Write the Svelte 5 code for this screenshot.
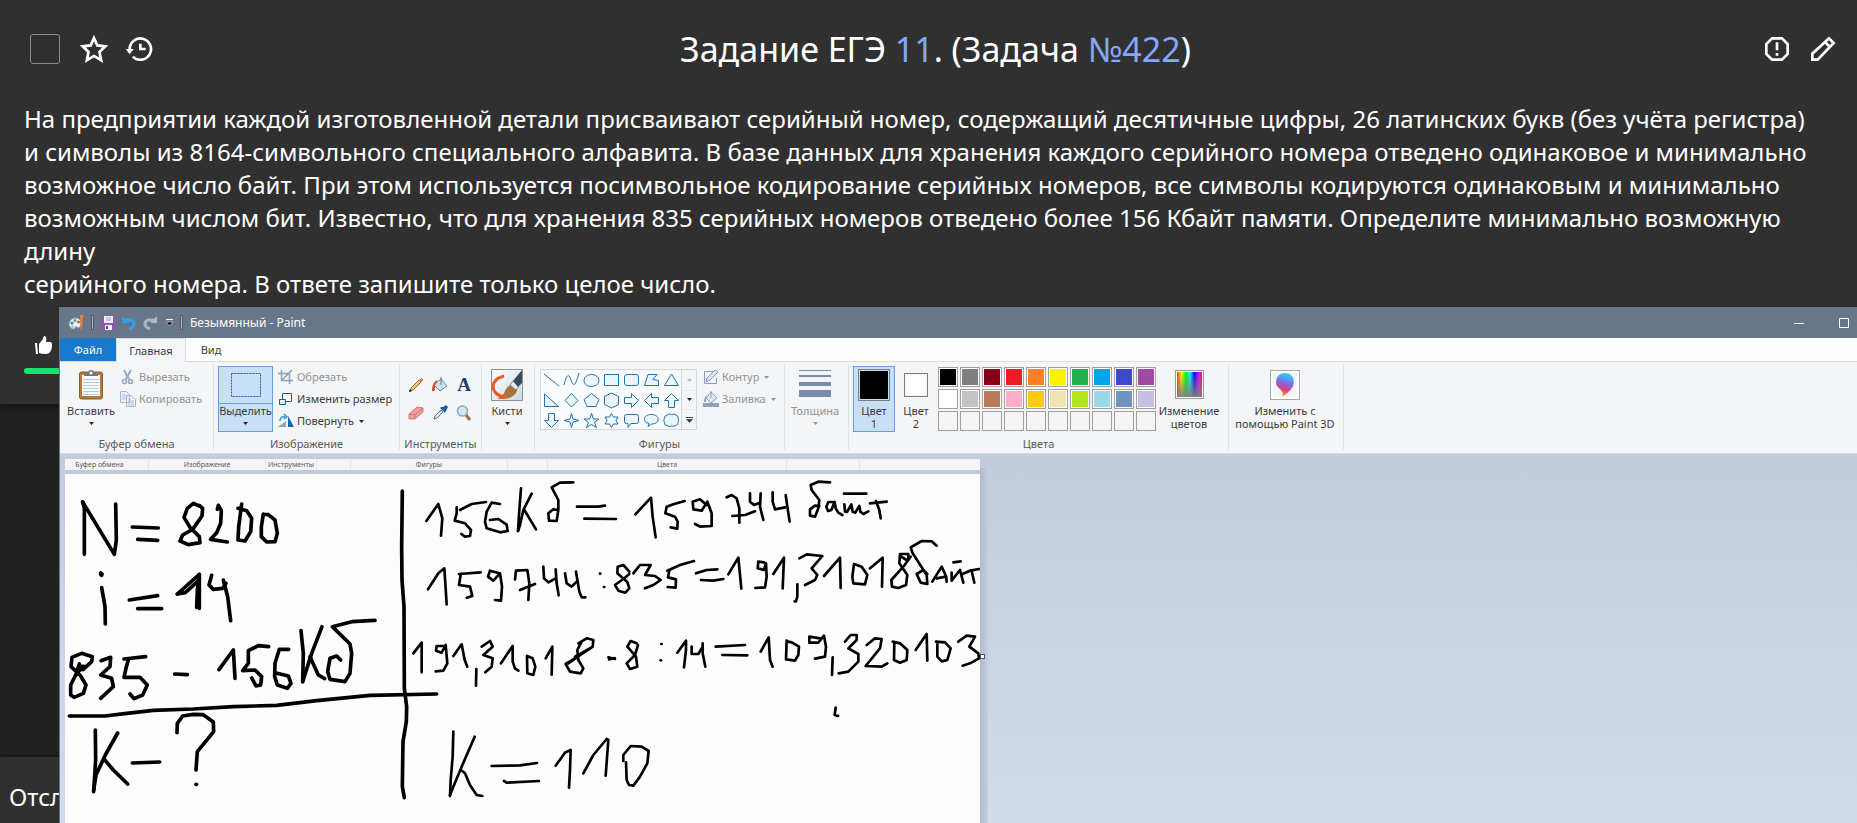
<script>
  const shapes = [
    'M1 2 16 14',
    'M1 13C4 1 6 2 8 8S12 16 16 1',
    'M8.500 2.500a7.500 6 0 1 0 .01 0z',
    'M1.500 2.500h14v11h-14z',
    'M4 2.500h9q2.500 0 2.500 2.500v6q0 2.500-2.500 2.500h-9q-2.500 0-2.500-2.500v-6q0-2.500 2.500-2.500z',
    'M5 2.500h9l-4 5 5.500 1v5h-14z',
    'M8.500 2 15.500 13.500h-14z',
    'M1.500 2v12.500h14z',
    'M8.500 1.500 15 8.500 8.500 15 2 8.500z',
    'M8.500 1.500 16 7.500 13 14.500H4L1 7.500z',
    'M8.500 1 15.500 4.500v8L8.500 16 1.500 12.500v-8z',
    'M1.500 5.500h7v-4l7 7-7 7v-4h-7z',
    'M15.500 5.500h-7v-4l-7 7 7 7v-4h7z',
    'M5.500 15.500v-7h-4l7-7 7 7h-4v7z',
    'M5.500 1.500v7h-4l7 7 7-7h-4v-7z',
    'M8.500 1.500 10 7l6 1.500L10 10 8.500 15.500 7 10 1 8.500 7 7z',
    'M8.500 1.500 10.500 7H16l-4.500 3.500 2 5-5-3-5 3 2-5L1 7h5.500z',
    'M8.500 1.500 10.500 5H15l-2 3.500 2 3.500h-4.500l-2 3.500-2-3.500H2l2-3.500L2 5h4.500z',
    'M3.500 2.500h10q2 0 2 2v5q0 2-2 2H8l-3 4v-4H3.500q-2 0-2-2v-5q0-2 2-2z',
    'M5 14.500 6 11.500C-1 10 0 2.500 8.500 2.500S18 12 8.500 12z',
    'M4 3q2-2 4.500-.500Q11 1 13 3q2.500.500 2 3 1.500 2.500 0 4.500.500 2.500-2.500 3-1.500 1.500-4 .500-2 1.500-4.500-.500-3 0-2.500-3Q0 8 1.500 6 1.500 3.500 4 3z'
  ];

  const palette = [
    '#000000', '#7f7f7f', '#880015', '#ed1c24', '#ff7f27', '#fff200', '#22b14c', '#00a2e8', '#3f48cc', '#a349a4',
    '#ffffff', '#c3c3c3', '#b97a57', '#ffaec9', '#ffc90e', '#efe4b0', '#b5e61d', '#99d9ea', '#7092be', '#c8bfe7',
    '', '', '', '', '', '', '', '', '', ''
  ];

  const strip = [
    { label: 'Буфер обмена', width: 84, first: true },
    { label: 'Изображение', width: 117 },
    { label: 'Инструменты', width: 51 },
    { label: '', width: 34 },
    { label: 'Фигуры', width: 157 },
    { label: '', width: 40 },
    { label: 'Цвета', width: 239 },
    { label: '', width: 73 }
  ];

  // Pen strokes of the canvas, three units to a pixel, grouped by pen size and sheet origin.
  const pens = [
    {
      x: -65, y: -34, size: 11,
      strokes: [
        '248,186 253,205 253,343', '248,186 343,343 349,300 347,192', '397,261 475,264', '413,298 473,301',
        '598,198 580,190 562,205 552,232 570,262 598,290 600,308 565,314 540,303 548,285 578,268 606,228 608,205 598,196',
        '652,208 655,196 664,212 662,250 650,278 632,298 682,306',
        '725,192 722,215 716,260 714,300 735,303 752,275 755,235 740,212 714,205',
        '790,222 784,260 784,290 800,306 825,305 832,280 825,240 805,224 790,222',
        '302,403 306,402', '302,399 305,406', '305,443 315,500 316,552', '388,480 473,467', '413,506 485,506',
        '532,462 598,403 592,450 590,502', '598,403 598,505', '532,462 556,458 592,425',
        '635,406 627,435 640,448 668,445 678,430', '670,420 683,470 692,542',
        '238,672 232,690 250,688 275,665 277,650 245,640 216,652 213,680 240,705 258,735 250,760 222,772 212,765 212,735 232,695 255,680 240,678',
        '303,662 332,652 330,680 302,705 335,715 340,740 302,775',
        '437,650 372,657', '385,660 378,685 372,712 420,712 442,735 428,765 402,776 390,762',
        '524,702 562,704', '657,689 700,630 705,715',
        '806,620 775,617 745,632 745,670 728,692 765,690 785,710 782,735 768,738 755,714',
        '866,628 838,628 825,670 824,710 832,735 862,745 873,730 865,708 828,699',
        '903,572 910,640 908,725', '966,560 935,640 908,725', '930,650 955,705 974,716',
        '1125,541 1055,545 997,560 1050,612 1055,640 1050,700 1035,725 990,718 983,695 990,655 1010,648 1022,660',
        '208,828 315,828 380,820 460,811 580,807 700,800 830,796 950,782 1110,766 1310,762',
        '1207,153 1205,320 1206,420 1212,500 1213,745 1220,800 1219,845 1209,905 1207,1040 1213,1073',
        '286,870 287,960 281,1055', '353,879 316,945 288,1005 281,1050', '312,957 340,990 383,1032', '397,969 479,966',
        '531,878 532,850 548,828 580,823 610,824 640,846 641,875 592,935 588,990', '588,1033 590,1033'
      ]
    },
    {
      x: 325, y: -24, size: 8,
      strokes: [
        '109,213 145,162 157,205 153,257', '288,156 245,162 210,180', '200,172 200,190 194,212 225,220 243,240 240,258 225,260 214,252',
        '330,162 305,158 290,185 285,215 290,235 330,247 353,243 350,224 325,207 300,210',
        '393,115 388,180 384,243', '425,131 400,180 390,225 384,243', '403,180 438,238',
        '550,97 510,98 485,112 505,150 505,180 500,213 477,212 475,190 490,178 505,180', '561,170 625,170 645,167', '583,206 678,207',
        '736,193 783,143 788,200 797,262', '884,153 850,163 830,170 826,190 855,200 863,215 862,236 842,232',
        '950,165 930,148 908,155 910,178 935,182 952,155 965,190 965,228 930,230 915,222',
        '114,418 145,370 163,355 166,400 170,463', '272,367 207,372', '212,375 207,405 240,410 247,438 230,443',
        '328,370 300,362 294,380 310,392 330,370 336,410 333,452 315,450', '375,388 378,362 412,360 418,400 415,450', '390,420 435,402',
        '460,350 462,385 475,397 497,385', '497,358 500,400 506,436', '525,370 530,400 545,410 560,395', '558,365 568,425 575,442 586,442',
        '630,371 631,371', '642,411 643,411', '718,365 700,345 683,350 682,370 712,396 718,415 706,428 685,422 675,405 700,387 718,372',
        '730,370 750,345 782,345 765,375 795,378 812,390 790,405 765,415', '912,333 870,345 832,362', '838,362 834,382 858,388 857,413 833,411',
        '918,370 950,360 982,358', '933,390 970,392 1000,387',
        '70,610 95,578 95,667', '165,588 140,588 138,602 155,608 167,585 172,640 160,662 137,664', '190,618 215,583 224,630 232,650',
        '259,657 258,707', '275,590 300,573 308,590 280,615 308,625 305,650 286,667', '333,640 368,588 368,635 375,655 385,662',
        '411,618 412,670 430,675 436,650 428,625 411,618', '467,625 487,590 485,674',
        '565,580 590,565 610,570 608,590 560,622 527,642 540,665 572,670 580,655 565,630 562,600 575,575', '555,620 600,595', '535,640 560,622',
        '655,622 675,627', '657,628 674,624', '740,580 722,573 712,590 738,620 742,650 720,657 710,640 735,615 744,585',
        '814,582 815,582', '812,631 813,631', '862,608 888,572 888,600 882,652', '905,590 905,612 925,612 935,595', '938,580 938,610 946,650',
        '190,845 188,920 182,990 180,1038', '254,860 215,950 190,1010 180,1035', '213,960 225,970 240,1005 260,1035 277,1038',
        '305,948 390,946 441,939', '342,993 350,998 447,993', '497,947 525,908 542,900 540,960 537,1013',
        '580,970 610,915 650,867 655,870 647,977', '708,937 710,990 717,1005 730,1007 750,980 772,940 776,903 755,890 722,888 700,915 700,933'
      ]
    },
    {
      x: 625, y: -24, size: 8,
      strokes: [
        '110,142 125,135 140,145 148,175 148,218', '127,198 165,195 195,184', '180,130 180,155 192,165 210,158', '212,130 210,170 220,210',
        '248,127 248,155 255,178 285,172', '287,135 292,170 299,215',
        '420,97 385,95 362,105 365,120 388,150 385,175 375,200 360,197 360,178 375,167 388,168',
        '428,156 415,156 409,170 414,183 424,180 434,156 437,175 445,188 457,195',
        '463,163 465,185 471,186 484,163 488,185 496,188 508,168 511,185 520,192 535,184', '462,131 529,131', '540,160 590,155', '558,153 568,180 572,205',
        '115,373 145,323 154,416', '222,337 205,335 203,355 222,360 228,340 230,380 225,412 196,414', '250,372 282,323 278,415',
        '322,403 322,440 318,454 314,454', '328,325 350,313 397,318 365,355 382,375 375,390 345,405', '402,378 450,323 452,414',
        '492,342 487,380 490,400 525,403 532,375 515,350 492,342', '540,355 578,323 576,410',
        '655,330 655,312 630,312 628,340 652,375 648,405 625,414 606,410 604,390 640,350 662,320', '630,318 650,330',
        '740,287 725,274 695,273 662,292 668,310 710,375 712,402 692,398 680,372 700,360 712,372', '727,395 755,350 768,378 770,395', '740,385 768,380',
        '785,368 785,392 810,360 820,398', '790,337 812,334', '818,372 840,362 868,357', '845,362 853,398',
        '77,590 165,585', '97,615 172,616', '212,605 236,562 240,630 248,650', '290,572 288,628 315,632 325,615 327,590 305,577 290,574',
        '390,565 358,560 358,578 385,578 402,557 408,590 405,620 375,626', '428,622 426,675',
        '465,575 482,555 500,555 500,570 475,595 505,612 505,635 475,665 446,670', '530,585 555,565 575,567 570,595 527,648 575,650 592,640',
        '613,577 612,630 630,638 650,630 652,600 630,580 608,575', '677,600 710,552 712,632',
        '742,578 742,620 755,634 772,630 782,595 765,577 738,575', '805,575 830,557 855,560 838,590 865,610 867,625 840,640 818,647',
        '437,773 434,795 444,798'
      ]
    }
  ];
</script>

{#snippet arrow()}
  <svg class="arrow" viewBox="0 0 5 3" aria-hidden="true"><path d="M0 0h5L2.500 3z" fill="currentColor" /></svg>
{/snippet}

<div class="page">
  <main class="card">
    <header>
      <div class="tools left">
        <input type="checkbox" aria-label="Решено" />
        <button aria-label="В избранное">
          <svg viewBox="0 0 24 24"><path d="M12 3.800 14.500 9.300 20.500 10 16.100 14.200 17.400 20.400 12 17.200 6.600 20.400 7.900 14.200 3.500 10 9.500 9.300z" fill="none" stroke="#fff" stroke-width="2" /></svg>
        </button>
        <button aria-label="История">
          <svg viewBox="0 0 24 24"><path d="M5 12.500A8 8 0 1 1 7.300 17.700M13 8v4h4" fill="none" stroke="#fff" stroke-width="2" /><path d="M2 12h6l-3 4z" fill="#fff" /></svg>
        </button>
      </div>
      <h1>Задание ЕГЭ <a href="#11">11</a>. (Задача <a href="#422">№422</a>)</h1>
      <div class="tools right">
        <button aria-label="Сообщить об ошибке">
          <svg viewBox="0 0 24 24"><path d="M8.300 4h7.400L20 8.300v7.400L15.700 20H8.300L4 15.700V8.300z" fill="none" stroke="#fff" stroke-width="2" /><path d="M11 7h2v6h-2zM11 15h2v2h-2z" fill="#fff" /></svg>
        </button>
        <button aria-label="Изменить">
          <svg viewBox="0 0 24 24"><path d="M4 20v-4.500L16.500 4 20 7.500 8 20zM13.500 6.700l3.500 3.600" fill="none" stroke="#fff" stroke-width="2" /></svg>
        </button>
      </div>
    </header>
    <p>На предприятии каждой изготовленной детали присваивают серийный номер, содержащий десятичные цифры, 26 латинских букв (без учёта регистра) и символы из 8164-символьного специального алфавита. В базе данных для хранения каждого серийного номера отведено одинаковое и минимально возможное число байт. При этом используется посимвольное кодирование серийных номеров, все символы кодируются одинаковым и минимально возможным числом бит. Известно, что для хранения 835 серийных номеров отведено более 156 Кбайт памяти. Определите минимально возможную длину<br />серийного номера. В ответе запишите только целое число.</p>
    <div class="rating">
      <button aria-label="Нравится">
        <svg viewBox="0 0 17 19"><path d="M0 7h2l1 11H1zM4 8l4-5Q8 0 10 0q2 1 1 6h4q2 0 2 2 0 6-2 8-1 2-4 2-5 0-7-1z" fill="#fff" /></svg>
      </button>
      <div class="bar"></div>
    </div>
  </main>
  <footer>Отсл</footer>

  <section class="window" aria-label="Безымянный - Paint">
    <div class="titlebar">
      <svg class="app" viewBox="0 0 16 16"><path d="M1 9Q2 3 8 3q6 1 5 6-1 5-4 3-2-1-2 1-1 2-4 0-2-2-2-4z" fill="#e8f2fa" stroke="#6db4dc" /><circle cx="4" cy="8" r="1.500" fill="#3c79d0" /><circle cx="7" cy="5.500" r="1.500" fill="#54ad4f" /><circle cx="10.500" cy="7" r="1.500" fill="#e1533c" /><circle cx="4.500" cy="11.500" r="1.300" fill="#efb339" /><path d="M12 0h4l-1 3-1 12h-1l-1-8z" fill="#dd8440" /></svg>
      <span class="sep"></span>
      <button aria-label="Сохранить"><svg viewBox="0 0 14 14"><path d="M0 0h14v14H1L0 13z" fill="#8b58ad" /><path d="M3 0h9v7H3zM4 9h7v5H4z" fill="#f1eef7" /><path d="M5 2h5M5 4h5" stroke="#aaa2bd" /><path d="M5 10h2v3H5z" fill="#65447e" /></svg></button>
      <button aria-label="Отменить"><svg viewBox="0 0 14 14"><path d="M2 4h5q5 0 5 4 0 3-5 5" fill="none" stroke="#2ea1eb" stroke-width="3" /><path d="M0 0v7h7z" fill="#2ea1eb" /></svg></button>
      <button aria-label="Вернуть"><svg viewBox="0 0 14 14"><path d="M12 4H7Q2 4 2 8q0 3 5 5" fill="none" stroke="#a9b8cd" stroke-width="3" /><path d="M14 0v7H7z" fill="#a9b8cd" /></svg></button>
      <button class="qat" aria-label="Настройка панели"><svg viewBox="0 0 7 7"><path d="M0 .500h7" stroke="#fff" /><path d="M0 3h7L3.500 7z" fill="#111" stroke="#fff" stroke-width=".500" /></svg></button>
      <span class="sep"></span>
      <span class="name">Безымянный - Paint</span>
      <button class="min" aria-label="Свернуть"><svg viewBox="0 0 10 10"><path d="M0 5.500h10" stroke="#fff" /></svg></button>
      <button aria-label="Развернуть"><svg viewBox="0 0 10 10"><path d="M.500 .500h9v9h-9z" fill="none" stroke="#fff" /></svg></button>
    </div>

    <nav>
      <button class="file">Файл</button>
      <button class="active">Главная</button>
      <button class="view">Вид</button>
    </nav>

    <div class="ribbon">
      <div class="group clip">
        <div class="body">
          <button class="big paste">
            <svg class="i32" viewBox="0 0 32 32"><rect x="4.500" y="3" width="23" height="27" rx="2" fill="#b27b3c" stroke="#8c5c2a" /><path d="M7 6h18v21H7z" fill="#f7fafd" /><path d="M8 10.500h16M8 13.500h16M8 16.500h16M8 19.500h16M8 22.500h16M8 25.500h16" stroke="#b9cbe0" /><path d="M9 7q0-3 4-3 0-3 3-3t3 3q4 0 4 3z" fill="#6e747c" /><circle cx="16" cy="4" r="1.500" fill="#fff" /></svg>
            <span>Вставить</span>{@render arrow()}
          </button>
          <div class="rows">
            <button disabled><svg class="i16" viewBox="0 0 16 16"><path d="M4 1l5 9M11 1 6 10" stroke="#93a5c2" stroke-width="2" /><circle cx="4.500" cy="12.500" r="2" fill="none" stroke="#93a5c2" stroke-width="1.500" /><circle cx="10.500" cy="12.500" r="2" fill="none" stroke="#93a5c2" stroke-width="1.500" /></svg>Вырезать</button>
            <button disabled><svg class="i16" viewBox="0 0 16 16"><path d="M.500 .500h6l3 3v8h-9zM6.500 4.500h5l4 4v7h-9z" fill="#edf2fa" stroke="#a7b6d0" /><path d="M2 4h4M2 6h4M2 8h4M8 8h3M8 10h6M8 12h6M8 14h6" stroke="#b3c0d7" /></svg>Копировать</button>
          </div>
        </div>
        <span class="caption">Буфер обмена</span>
      </div>

      <div class="group image">
        <div class="body">
          <button class="big select">
            <svg class="i32" viewBox="0 0 32 32"><rect x="1.500" y="4.500" width="29" height="23" fill="none" stroke="#1263a8" stroke-dasharray="2 1" /></svg>
            <span>Выделить</span>{@render arrow()}
          </button>
          <div class="rows">
            <button disabled><svg class="i16" viewBox="0 0 16 16"><path d="M0 4.500h11.500V15M3.500 1v10.500H15M4 11l8-8 2-2" fill="none" stroke="#8fa0bd" stroke-width="1.500" /></svg>Обрезать</button>
            <button><svg class="i16" viewBox="0 0 16 16"><path d="M4.500 2.500h9v8h-9z" fill="#fff" stroke="#1263a8" /><path d="M1.500 8.500h6v5h-6z" fill="#e3f0fb" stroke="#1263a8" /></svg>Изменить размер</button>
            <button><svg class="i16" viewBox="0 0 16 16"><path d="M0 14 8 8v6z" fill="#93a5b7" /><path d="M10 14V3l6 11z" fill="#1468ad" /><path d="M2 8q0-5 5-4M6 1l3 3-3 2" fill="none" stroke="#2590df" stroke-width="1.500" /></svg>Повернуть {@render arrow()}</button>
          </div>
        </div>
        <span class="caption">Изображение</span>
      </div>

      <div class="group instruments">
        <div class="body toolgrid">
          <button aria-label="Карандаш"><svg class="i16" viewBox="0 0 16 16"><path d="M1.500 14.500 3.500 10.500 11 3l2 2-7.500 7.500z" fill="#f4cf68" stroke="#85662b" /><path d="M11 3q2-3 4-1 1 1-2 3z" fill="#e57373" /><path d="M1 15l1-3 2 2z" fill="#222" /></svg></button>
          <button aria-label="Заливка цветом"><svg class="i16" viewBox="0 0 16 16"><path d="M9 2l6 7-7 5-6-6z" fill="#cfe2f3" stroke="#5f87ad" /><path d="M9 0v8" stroke="#60778e" /><path d="M6 3Q0 4 0 14q2 1 3-1V8z" fill="#e35224" /></svg></button>
          <button class="letter" aria-label="Текст">A</button>
          <button aria-label="Ластик"><svg class="i16" viewBox="0 0 16 16"><path d="M1 9 9 2l6 1v4l-8 7H1z" fill="#ef9d97" stroke="#cc7c76" /><path d="M1 9l6 1 8-7M7 10v4" fill="none" stroke="#c97874" /></svg></button>
          <button aria-label="Палитра"><svg class="i16" viewBox="0 0 16 16"><path d="M2 14 3 11 9 5l2 2-6 6z" fill="#d7eafa" stroke="#557a9f" /><path d="M8 3l5 5 1-2 2-4-2-2-3 2-2 0z" fill="#1f5ea8" /></svg></button>
          <button aria-label="Масштаб"><svg class="i16" viewBox="0 0 16 16"><path d="M10 10l4 5" stroke="#9a713e" stroke-width="3" /><circle cx="6.500" cy="6" r="5" fill="#d2e9fa" stroke="#8ea4b8" stroke-width="1.500" /></svg></button>
        </div>
        <span class="caption">Инструменты</span>
      </div>

      <div class="group brushes">
        <div class="body">
          <button class="big">
            <svg class="i32" viewBox="0 0 32 32"><defs><linearGradient id="sheet" x2="1" y2="1"><stop offset="0" stop-color="#fff" /><stop offset="1" stop-color="#c9dce0" /></linearGradient></defs><rect x=".500" y=".500" width="31" height="31" fill="url(#sheet)" stroke="#8a9095" /><path d="M13 7Q2 10 2 18q1 8 11 10" fill="none" stroke="#ec5826" stroke-width="3" /><path d="M11 30Q12 25 15 20q3-5 8-4 5 3 2 8-4 6-14 6z" fill="#a8733c" /><path d="M7 30q4-6 8-4 1 3-3 4z" fill="#e8582d" /><path d="M19 16l3-4 6 5-3 4z" fill="#e4eaee" stroke="#81909a" /><path d="M22 12 31 1v13l-4 4z" fill="#3c4b5b" /></svg>
            <span>Кисти</span>{@render arrow()}
          </button>
        </div>
      </div>

      <div class="group figures">
        <div class="body">
          <div class="gallery">
            <div class="shapes">
              {#each shapes as d, i}
                <button aria-label={`Фигура ${i + 1}`}><svg viewBox="0 0 17 17"><path {d} fill={i < 2 ? 'none' : '#eaf6fd'} stroke="#2470ad" /></svg></button>
              {/each}
            </div>
            <div class="scroll">
              <button aria-label="Вверх"><svg class="arrow" viewBox="0 0 5 3"><path d="M0 3h5L2.500 0z" fill="#b3b8c0" /></svg></button>
              <button aria-label="Вниз">{@render arrow()}</button>
              <button aria-label="Все фигуры"><svg viewBox="0 0 7 6"><path d="M0 .500h7" stroke="#3a3f4c" /><path d="M0 2h7L3.500 6z" fill="#3a3f4c" /></svg></button>
            </div>
          </div>
          <div class="rows">
            <button disabled><svg class="i16" viewBox="0 0 16 16"><path d="M13.500 9v5.500H1.500v-12H10" fill="none" stroke="#8c9dbb" /><path d="M3 13l1-4 8-8 3 2-8 8z" fill="#dbe3ef" stroke="#8fa0bd" /></svg>Контур {@render arrow()}</button>
            <button disabled><svg class="i16" viewBox="0 0 16 16"><path d="M8 1l6 6-6 5-5-5z" fill="#dce5f0" stroke="#8fa0bd" /><path d="M8 0v7" stroke="#8fa0bd" /><path d="M0 12h16v4H0z" fill="#8fa0bd" /><path d="M4 4Q1 6 1 11h2V7z" fill="#8fa0bd" /></svg>Заливка {@render arrow()}</button>
          </div>
        </div>
        <span class="caption">Фигуры</span>
      </div>

      <div class="group width">
        <div class="body">
          <button class="big" disabled>
            <svg class="i32" viewBox="0 0 32 32"><path d="M0 1h32v1H0zM0 6h32v2H0zM0 13h32v4H0zM0 21h32v7H0z" fill="#7a8cae" /></svg>
            <span>Толщина</span>{@render arrow()}
          </button>
        </div>
      </div>

      <div class="group colors">
        <div class="body">
          <button class="big color one"><i></i><span>Цвет<br />1</span></button>
          <button class="big color two"><i></i><span>Цвет<br />2</span></button>
          <div class="palette">
            {#each palette as color, i}
              <button aria-label={`Образец ${i + 1}`} style:background-color={color || null} class:empty={!color}></button>
            {/each}
          </div>
          <button class="big edit">
            <span class="spectrum"></span>
            <span>Изменение<br />цветов</span>
          </button>
        </div>
        <span class="caption">Цвета</span>
      </div>

      <div class="group three">
        <div class="body">
          <button class="big">
            <svg class="i32" viewBox="0 0 32 32"><defs><linearGradient id="drop" x1=".600" x2=".400" y2="1"><stop offset="0" stop-color="#25d9e8" /><stop offset=".400" stop-color="#7b6cf0" /><stop offset=".700" stop-color="#e03a72" /><stop offset="1" stop-color="#f8b51c" /></linearGradient></defs><rect x="1.500" y="1.500" width="29" height="29" fill="#fff" stroke="#a5a8ad" /><path d="M4 4h24v24H4z" fill="#f3f4f6" /><path d="M13 28q2-5-2-8-4-3-4-7 1-9 9-9t9 9q0 7-12 15z" fill="url(#drop)" /></svg>
            <span>Изменить с<br />помощью Paint 3D</span>
          </button>
        </div>
      </div>
    </div>

    <div class="workspace">
      <div class="sheet">
        <div class="strip">
          {#each strip as cell}
            <span class:first={cell.first} style:width={`${cell.width}px`}>{cell.label}</span>
          {/each}
        </div>
        <svg class="drawing" width="915" height="349" viewBox="0 0 915 349" role="img" aria-label="Решение задачи">
          {#each pens as pen}
            <g transform={`translate(${pen.x} ${pen.y}) scale(.33333)`} stroke-width={pen.size}>
              {#each pen.strokes as points}<polyline {points} />{/each}
            </g>
          {/each}
        </svg>
        <span class="shade"></span>
        <span class="handle"></span>
      </div>
    </div>
  </section>
</div>

<style>
  :global(body) { margin: 0; background: #212121; }
  .page {
    position: relative;
    display: flex;
    flex-direction: column;
    justify-content: space-between;
    min-height: 100vh;
    overflow: hidden;
    background: #212121;
    color: #fff;
    font-family: 'Noto Sans', sans-serif;
  }
  button { border: 0; padding: 0; background: none; color: inherit; font: inherit; }
  svg { display: block; }
  .card { background: #303030; box-shadow: 0 2px 10px #111; padding-bottom: 30px; }
  header {
    display: grid;
    grid-template-columns: 1fr auto 1fr;
    align-items: center;
    height: 98px;
    padding: 0 16px 0 30px;
  }
  .tools { display: flex; align-items: center; }
  .tools svg { width: 32px; height: 32px; }
  .left { gap: 13px; }
  .left input {
    appearance: none;
    width: 30px;
    height: 30px;
    margin: 0 5px 0 0;
    border: 1px solid #8c8c8c;
    border-radius: 3px;
  }
  .right { justify-content: flex-end; gap: 14px; padding-right: 2px; }
  h1 { margin: 0; font-size: 34px; font-weight: 400; line-height: 48px; }
  a { color: #82a8ff; text-decoration: none; }
  p { margin: 4px 40px 0 24px; font-size: 24px; line-height: 33px; }
  .rating { padding: 36px 24px 0; }
  .rating button { display: block; margin-left: 11px; }
  .rating svg { width: 17px; height: 19px; }
  .bar { width: 160px; height: 6px; margin-top: 13px; border-radius: 3px; background: #1be070; }
  footer {
    box-sizing: border-box;
    height: 66px;
    padding: 23px 9px 0;
    background: #303030;
    box-shadow: 0 -1px 4px #151515;
    font-size: 24px;
    line-height: 33px;
  }

  .window {
    position: absolute;
    inset: 307px 0 0 59px;
    display: flex;
    flex-direction: column;
    overflow: hidden;
    border-left: 1px solid #687689;
    background: #c4cddd;
    color: #3c3c3c;
    font-size: 11px;
    line-height: 16px;
  }
  .titlebar {
    display: flex;
    align-items: center;
    gap: 7px;
    height: 31px;
    flex: none;
    padding: 0 8px;
    background: #687689;
    color: #fff;
    font-size: 12px;
  }
  .titlebar svg { width: 14px; height: 14px; }
  .titlebar .app { width: 16px; height: 16px; }
  .titlebar .qat svg { width: 7px; height: 7px; margin-left: 2px; }
  .titlebar .name { flex: 1; }
  .titlebar .name ~ button svg { width: 10px; height: 10px; }
  .titlebar .min { margin-right: 28px; }
  .sep { width: 1px; height: 13px; border: 1px solid #50596a; background: #a9b1bd; }

  nav { display: flex; flex: none; height: 23px; border-bottom: 1px solid #d9dbde; background: #fefefe; }
  nav button { height: 24px; }
  .file { width: 56px; height: 23px; background: #1979ca; color: #fff; }
  .active { width: 70px; box-sizing: border-box; border: 1px solid #d9dbde; border-bottom: 0; background: #f4f6f8; }
  .view { width: 50px; }

  .ribbon { display: flex; flex: none; height: 91px; border-bottom: 1px solid #d5d9df; background: #f4f5f7; }
  .group {
    box-sizing: border-box;
    display: flex;
    flex-direction: column;
    justify-content: space-between;
    flex: none;
    height: 86px;
    margin-top: 2px;
    padding-top: 2px;
    border-right: 1px solid #dfe1e4;
  }
  .body { display: flex; }
  .caption { text-align: center; line-height: 12px; color: #5a5a5a; }
  .big { display: flex; flex-direction: column; align-items: center; box-sizing: border-box; height: 66px; padding-top: 3px; line-height: 13px; }
  .big > span:not(.spectrum) { margin-top: 3px; text-align: center; white-space: nowrap; }
  .big .arrow { margin-top: 5px; }
  .arrow { width: 5px; height: 3px; color: #222; flex: none; }
  .i32 { width: 32px; height: 32px; flex: none; }
  .i16 { width: 16px; height: 16px; flex: none; }
  .rows button { display: flex; align-items: center; gap: 3px; height: 22px; white-space: nowrap; }
  .rows .arrow { margin-left: 2px; }
  button:disabled, button:disabled .arrow { color: #939393; }

  .clip { width: 154px; }
  .paste { width: 58px; margin-left: 2px; }
  .image { width: 186px; }
  .image .body { gap: 5px; padding-left: 4px; }
  .select { width: 55px; border: 1px solid #669fe0; padding-top: 2px; background: linear-gradient(#c9dff5 36px, #669fe0 36px 37px, #c9dff5 37px); }
  .instruments { width: 82px; }
  .toolgrid { display: grid; grid-template-columns: repeat(3, 24px); padding: 5px 4px 0; }
  .toolgrid button { display: grid; place-items: center; height: 28px; }
  .toolgrid .letter { font-family: 'Liberation Serif', serif; font-size: 19px; font-weight: 700; color: #1e3d66; line-height: 20px; }
  .brushes { width: 53px; }
  .brushes .big { width: 50px; }
  .figures { width: 250px; }
  .figures .body { gap: 6px; padding-left: 5px; }
  .gallery { display: flex; box-sizing: border-box; height: 61px; margin-top: 3px; border: 1px solid #d3d6db; background: #fafbfc; }
  .shapes { display: grid; grid-template: repeat(3, 20px) / repeat(7, 20px); place-items: center; }
  .shapes svg { width: 17px; height: 17px; }
  .scroll { display: grid; grid-template-rows: repeat(3, 1fr); width: 14px; border-left: 1px solid #d3d6db; background: #f4f5f7; }
  .scroll button { display: grid; place-items: center; }
  .scroll button + button { border-top: 1px solid #e8eaed; }
  .scroll svg:not(.arrow) { width: 7px; height: 6px; }
  .width { width: 64px; }
  .width .big { width: 60px; }
  .colors { width: 380px; }
  .colors .body { padding-left: 4px; }
  .color { width: 42px; }
  .color i { display: block; box-sizing: border-box; width: 32px; height: 32px; border: 1px solid #7d7d7d; background-clip: content-box; padding: 1px; }
  .one { border: 1px solid #669fe0; padding-top: 2px; background: #c9dff5; }
  .one i { background-color: #000; }
  .two i { width: 24px; height: 24px; margin: 4px; background-color: #fff; }
  .palette { display: grid; grid-template: repeat(3, 20px) / repeat(10, 20px); gap: 2px; margin: 1px 0 0 1px; }
  .palette button { border: 1px solid #a0a0a0; box-shadow: inset 0 0 0 1px #fff; }
  .palette .empty { box-shadow: none; }
  .edit { width: 66px; }
  .spectrum {
    box-sizing: border-box;
    width: 29px;
    height: 29px;
    margin: 1px 0 2px;
    border: 1px solid #999;
    box-shadow: inset 0 0 0 1px #fff;
    background: linear-gradient(transparent, #808080), linear-gradient(90deg, red, yellow 20%, lime 36%, cyan 52%, blue 68%, magenta 86%, red);
  }
  .three { width: 115px; }
  .three .body { justify-content: center; }
  .three .big { margin-right: 2px; }

  .workspace { flex: 1; padding: 5px 0 0 5px; background: linear-gradient(#c3ccdd, #d2dceb); }
  .sheet { position: relative; width: 915px; min-height: 100%; background: #fdfdfd; }
  .strip { display: flex; height: 11px; border-bottom: 4px solid #c1c9dc; background: #f6f4f8; color: #5a5a5a; font-size: 7px; line-height: 11px; }
  .strip span { box-sizing: border-box; border-right: 1px solid #e6e4ea; text-align: center; white-space: nowrap; }
  .strip .first { padding-right: 14px; }
  .drawing { fill: none; stroke: #000; stroke-linecap: round; stroke-linejoin: round; }
  .shade { position: absolute; inset: 9px -8px 0 auto; width: 8px; background: linear-gradient(90deg, #adbace, #c5cfdf); }
  .handle { position: absolute; top: 195px; right: -5px; box-sizing: border-box; width: 5px; height: 5px; border: 1px solid #555; background: #fff; }
</style>
